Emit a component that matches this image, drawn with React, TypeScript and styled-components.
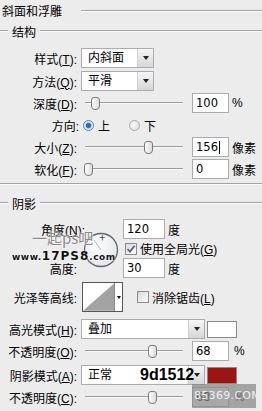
import React from "react";
import styled, { createGlobalStyle } from "styled-components";

const Global = createGlobalStyle`
  html, body { margin: 0; padding: 0; background: #ececec; }
  body { font-family: "Liberation Sans", "Noto Sans CJK SC", sans-serif; font-size: 12px; color: #000; }
`;

const Panel = styled.div`
  position: relative;
  width: 262px;
  height: 411px;
  overflow: hidden;
  background: #ececec;
  display: flex;
  flex-direction: column;
`;

const TitleRow = styled.div`
  display: flex;
  align-items: center;
  height: 21px;
  padding-left: 2px;
  flex-shrink: 0;
`;

const GroupLine = styled.div<{ $ml?: number; $w?: number }>`
  ${(p) => (p.$w ? `width: ${p.$w}px;` : "flex: 1;")}
  margin-left: ${(p) => p.$ml ?? 0}px;
  border-top: 1px solid #a3a3a3;
  border-bottom: 1px solid #fbfbfb;
  height: 0;
`;

const SectionHeader = styled.div<{ $mt?: number }>`
  display: flex;
  align-items: center;
  height: 20px;
  margin-top: ${(p) => p.$mt ?? 0}px;
  flex-shrink: 0;
`;

const SectionTitle = styled.span`
  padding: 0 4px;
`;

const Separator = styled.div<{ $mt: number }>`
  margin-top: ${(p) => p.$mt}px;
  border-top: 1px solid #a3a3a3;
  border-bottom: 1px solid #fbfbfb;
  flex-shrink: 0;
`;

const Row = styled.div<{ $mt: number; $h?: number }>`
  display: flex;
  align-items: center;
  height: ${(p) => p.$h ?? 20}px;
  margin-top: ${(p) => p.$mt}px;
  flex-shrink: 0;
  position: relative;
`;

const Label = styled.span<{ $w?: number }>`
  width: ${(p) => p.$w ?? 77}px;
  flex-shrink: 0;
  text-align: right;
  white-space: nowrap;
`;

const Acc = styled.span`
  text-decoration: underline;
`;

const Select = styled.div<{ $w: number }>`
  margin-left: 4px;
  width: ${(p) => p.$w}px;
  height: 20px;
  box-sizing: border-box;
  border: 1px solid #a9acb2;
  background: #fff;
  display: flex;
  flex-shrink: 0;
`;

const SelectText = styled.span`
  flex: 1;
  padding-left: 6px;
  line-height: 18px;
`;

const SelectButton = styled.span`
  width: 15px;
  background: linear-gradient(#f6f6f6, #d6d6d6);
  border-left: 1px solid #d0d0d0;
  display: flex;
  align-items: center;
  justify-content: center;
  &::after {
    content: "";
    border-left: 3.5px solid transparent;
    border-right: 3.5px solid transparent;
    border-top: 4px solid #222;
  }
`;

const Slider = styled.div`
  margin-left: 8px;
  width: 98px;
  height: 14px;
  position: relative;
  flex-shrink: 0;
  &::before {
    content: "";
    position: absolute;
    left: 0;
    right: 0;
    top: 6px;
    border-top: 1px solid #9c9c9c;
    border-bottom: 1px solid #f8f8f8;
  }
`;

const Thumb = styled.span`
  position: absolute;
  top: 1px;
  width: 7px;
  height: 11px;
  margin-left: -4px;
  border: 1px solid #7b7b7b;
  border-radius: 3px 3px 4px 4px;
  background: linear-gradient(90deg, #fdfdfd, #dcdcdc);
`;

const NumInput = styled.div<{ $ml?: number; $w?: number }>`
  margin-left: ${(p) => p.$ml ?? 9}px;
  width: ${(p) => p.$w ?? 37}px;
  height: 20px;
  box-sizing: border-box;
  border: 1px solid #a9acb2;
  background: #fff;
  padding-left: 3px;
  line-height: 18px;
  font-family: "DejaVu Sans", "Liberation Sans", sans-serif;
  font-size: 11.5px;
  flex-shrink: 0;
  display: flex;
  align-items: center;
`;

const Caret = styled.span`
  display: inline-block;
  width: 1px;
  height: 13px;
  background: #000;
  margin-left: 1px;
`;

const Unit = styled.span<{ $ml?: number }>`
  margin-left: ${(p) => p.$ml ?? 3}px;
`;

const Radio = styled.span<{ $on?: boolean; $ml: number }>`
  margin-left: ${(p) => p.$ml}px;
  width: 11px;
  height: 11px;
  border-radius: 50%;
  box-sizing: border-box;
  border: 1px solid ${(p) => (p.$on ? "#5a7fa4" : "#a8a8a8")};
  background: ${(p) =>
    p.$on
      ? "radial-gradient(circle at 50% 50%, #1d5f95 0, #2f7ab8 2.2px, #cfe0ee 3.3px, #f4f8fb 5px)"
      : "radial-gradient(circle at 40% 40%, #fafafa, #d9d9d9)"};
  flex-shrink: 0;
`;

const RadioText = styled.span`
  margin-left: 4px;
`;

const Check = styled.span<{ $on?: boolean; $ml: number }>`
  margin-left: ${(p) => p.$ml}px;
  width: 12px;
  height: 12px;
  box-sizing: border-box;
  border: 1px solid #8c8c8c;
  background: linear-gradient(135deg, #d8d8d8, #fdfdfd);
  display: flex;
  align-items: center;
  justify-content: center;
  flex-shrink: 0;
`;

const CheckText = styled.span`
  margin-left: 3px;
`;

const AngleBlock = styled.div`
  display: grid;
  grid-template-columns: 78px 45px 1fr;
  grid-template-rows: 20px 19px 20px;
  margin-top: 6px;
  flex-shrink: 0;
`;

const AngleLabel = styled.span`
  grid-column: 1 / 3;
  grid-row: 1;
  text-align: right;
  padding-right: 38px;
  align-self: center;
`;

const HeightLabel = styled.span`
  grid-column: 1;
  grid-row: 3;
  text-align: right;
  padding-right: 1px;
  align-self: center;
`;

const Dial = styled.svg`
  grid-column: 2;
  grid-row: 1 / 4;
  margin-top: 13px;
  margin-left: 5px;
`;

const Cell = styled.div<{ $row: number }>`
  grid-column: 3;
  grid-row: ${(p) => p.$row};
  display: flex;
  align-items: center;
`;

const Contour = styled.div`
  margin-left: 5px;
  width: 41px;
  height: 30px;
  box-sizing: border-box;
  border: 1px solid #555;
  background: #fff;
  display: flex;
  flex-shrink: 0;
`;

const ContourDrop = styled.span`
  width: 7px;
  border-left: 1px solid #888;
  background: #fff;
  display: flex;
  align-items: center;
  justify-content: center;
  &::after {
    content: "";
    border-left: 2.5px solid transparent;
    border-right: 2.5px solid transparent;
    border-top: 3px solid #111;
  }
`;

const Swatch = styled.span<{ $color: string }>`
  margin-left: 2px;
  width: 30px;
  height: 17px;
  box-sizing: border-box;
  border: 1px solid #8a8a8a;
  background: ${(p) => p.$color};
  flex-shrink: 0;
`;

const HexNote = styled.span`
  position: absolute;
  left: 140px;
  top: 1px;
  font-family: "Liberation Sans", sans-serif;
  font-weight: bold;
  font-size: 16px;
  line-height: 18px;
  color: #000;
`;

const WaterMark = styled.div`
  position: absolute;
  left: 12px;
  top: 229px;
  pointer-events: none;
`;

const WmTop = styled.div`
  margin-left: 20px;
  font-family: "Noto Sans CJK SC", sans-serif;
  font-size: 15px;
  line-height: 17px;
  color: #8a8a8a;
  text-shadow: 0 0 2px #fff, 0 0 1px #fff;
  display: flex;
  align-items: center;
`;

const WmCross = styled.span`
  margin-left: 6px;
  font-size: 11px;
  color: #444;
`;

const WmBottom = styled.div`
  font-family: "DejaVu Sans", sans-serif;
  font-weight: bold;
  font-size: 9px;
  line-height: 12px;
  color: #111;
  letter-spacing: 0.5px;
  text-shadow: 0 0 2px #fff, 0 0 1px #fff;
  margin-top: 4px;
`;

const WmBig = styled.span`
  font-size: 12px;
  letter-spacing: 1px;
`;

const Stamp = styled.div`
  position: absolute;
  left: 192px;
  top: 384px;
  width: 64px;
  height: 24px;
  background: rgba(135, 135, 135, 0.72);
  color: #eef0f2;
  font-family: "DejaVu Sans", sans-serif;
  font-size: 11px;
  line-height: 24px;
  padding-left: 2px;
  box-sizing: border-box;
  letter-spacing: 0.3px;
`;

function Lbl({ text, acc }: { text: string; acc: string }) {
  return (
    <>
      {text}(<Acc>{acc}</Acc>):
    </>
  );
}

export default function App() {
  return (
    <>
      <Global />
      <Panel>
        <TitleRow>
          斜面和浮雕
          <GroupLine $ml={19} />
        </TitleRow>
        <SectionHeader>
          <GroupLine $w={8} />
          <SectionTitle>结构</SectionTitle>
          <GroupLine />
        </SectionHeader>

        <Row $mt={7}>
          <Label><Lbl text="样式" acc="T" /></Label>
          <Select $w={73}>
            <SelectText>内斜面</SelectText>
            <SelectButton />
          </Select>
        </Row>
        <Row $mt={3}>
          <Label><Lbl text="方法" acc="Q" /></Label>
          <Select $w={73}>
            <SelectText>平滑</SelectText>
            <SelectButton />
          </Select>
        </Row>
        <Row $mt={2}>
          <Label><Lbl text="深度" acc="D" /></Label>
          <Slider><Thumb style={{ left: "10px" }} /></Slider>
          <NumInput>100</NumInput>
          <Unit>%</Unit>
        </Row>
        <Row $mt={2}>
          <Label $w={79}>方向:</Label>
          <Radio $on $ml={4} />
          <RadioText>上</RadioText>
          <Radio $ml={19} />
          <RadioText>下</RadioText>
        </Row>
        <Row $mt={2}>
          <Label><Lbl text="大小" acc="Z" /></Label>
          <Slider><Thumb style={{ left: "63px" }} /></Slider>
          <NumInput>156<Caret /></NumInput>
          <Unit>像素</Unit>
        </Row>
        <Row $mt={2}>
          <Label><Lbl text="软化" acc="F" /></Label>
          <Slider><Thumb style={{ left: "3px" }} /></Slider>
          <NumInput>0</NumInput>
          <Unit>像素</Unit>
        </Row>

        <Separator $mt={4} />

        <SectionHeader $mt={8}>
          <GroupLine $w={8} />
          <SectionTitle>阴影</SectionTitle>
          <GroupLine />
        </SectionHeader>

        <AngleBlock>
          <AngleLabel><Lbl text="角度" acc="N" /></AngleLabel>
          <Dial width="36" height="36" viewBox="0 0 36 36">
            <defs>
              <radialGradient id="dialFill" cx="40%" cy="35%" r="70%">
                <stop offset="0" stopColor="#ffffff" />
                <stop offset="1" stopColor="#e2e4e8" />
              </radialGradient>
            </defs>
            <circle cx="18" cy="18" r="16.5" fill="url(#dialFill)" stroke="#5e6470" strokeWidth="1.3" />
            <line x1="18" y1="18" x2="11" y2="8" stroke="#9aa0a8" strokeWidth="0.8" />
          </Dial>
          <Cell $row={1}>
            <NumInput $ml={0} $w={42}>120</NumInput>
            <Unit $ml={3}>度</Unit>
          </Cell>
          <Cell $row={2}>
            <Check $on $ml={2}>
              <svg width="10" height="10" viewBox="0 0 10 10">
                <path d="M1.5 5 L4 7.6 L8.6 1.8" fill="none" stroke="#56657a" strokeWidth="1.8" />
              </svg>
            </Check>
            <CheckText>使用全局光(<Acc>G</Acc>)</CheckText>
          </Cell>
          <HeightLabel>高度:</HeightLabel>
          <Cell $row={3}>
            <NumInput $ml={0} $w={42}>30</NumInput>
            <Unit $ml={3}>度</Unit>
          </Cell>
        </AngleBlock>

        <Row $mt={4} $h={30}>
          <Label>光泽等高线:</Label>
          <Contour>
            <svg width="32" height="28" viewBox="0 0 32 28">
              <polygon points="0,28 32,0 32,28" fill="#a3a3a3" />
            </svg>
            <ContourDrop />
          </Contour>
          <Check $ml={14} />
          <CheckText>消除锯齿(<Acc>L</Acc>)</CheckText>
        </Row>

        <Row $mt={7}>
          <Label><Lbl text="高光模式" acc="H" /></Label>
          <Select $w={124}>
            <SelectText>叠加</SelectText>
            <SelectButton />
          </Select>
          <Swatch $color="#ffffff" />
        </Row>
        <Row $mt={2}>
          <Label><Lbl text="不透明度" acc="O" /></Label>
          <Slider><Thumb style={{ left: "67px" }} /></Slider>
          <NumInput>68</NumInput>
          <Unit $ml={5}>%</Unit>
        </Row>
        <Row $mt={4}>
          <Label><Lbl text="阴影模式" acc="A" /></Label>
          <Select $w={124}>
            <SelectText>正常</SelectText>
            <SelectButton />
          </Select>
          <Swatch $color="#9d1512" />
          <HexNote>9d1512</HexNote>
        </Row>
        <Row $mt={2}>
          <Label><Lbl text="不透明度" acc="C" /></Label>
          <Slider><Thumb style={{ left: "67px" }} /></Slider>
          <NumInput>68</NumInput>
          <Unit $ml={5}>%</Unit>
        </Row>

        <WaterMark>
          <WmTop>
            一起ps吧<WmCross>+</WmCross>
          </WmTop>
          <WmBottom>
            www.<WmBig>17PS8</WmBig>.com
          </WmBottom>
        </WaterMark>
        <Stamp>85369.COM</Stamp>
      </Panel>
    </>
  );
}
